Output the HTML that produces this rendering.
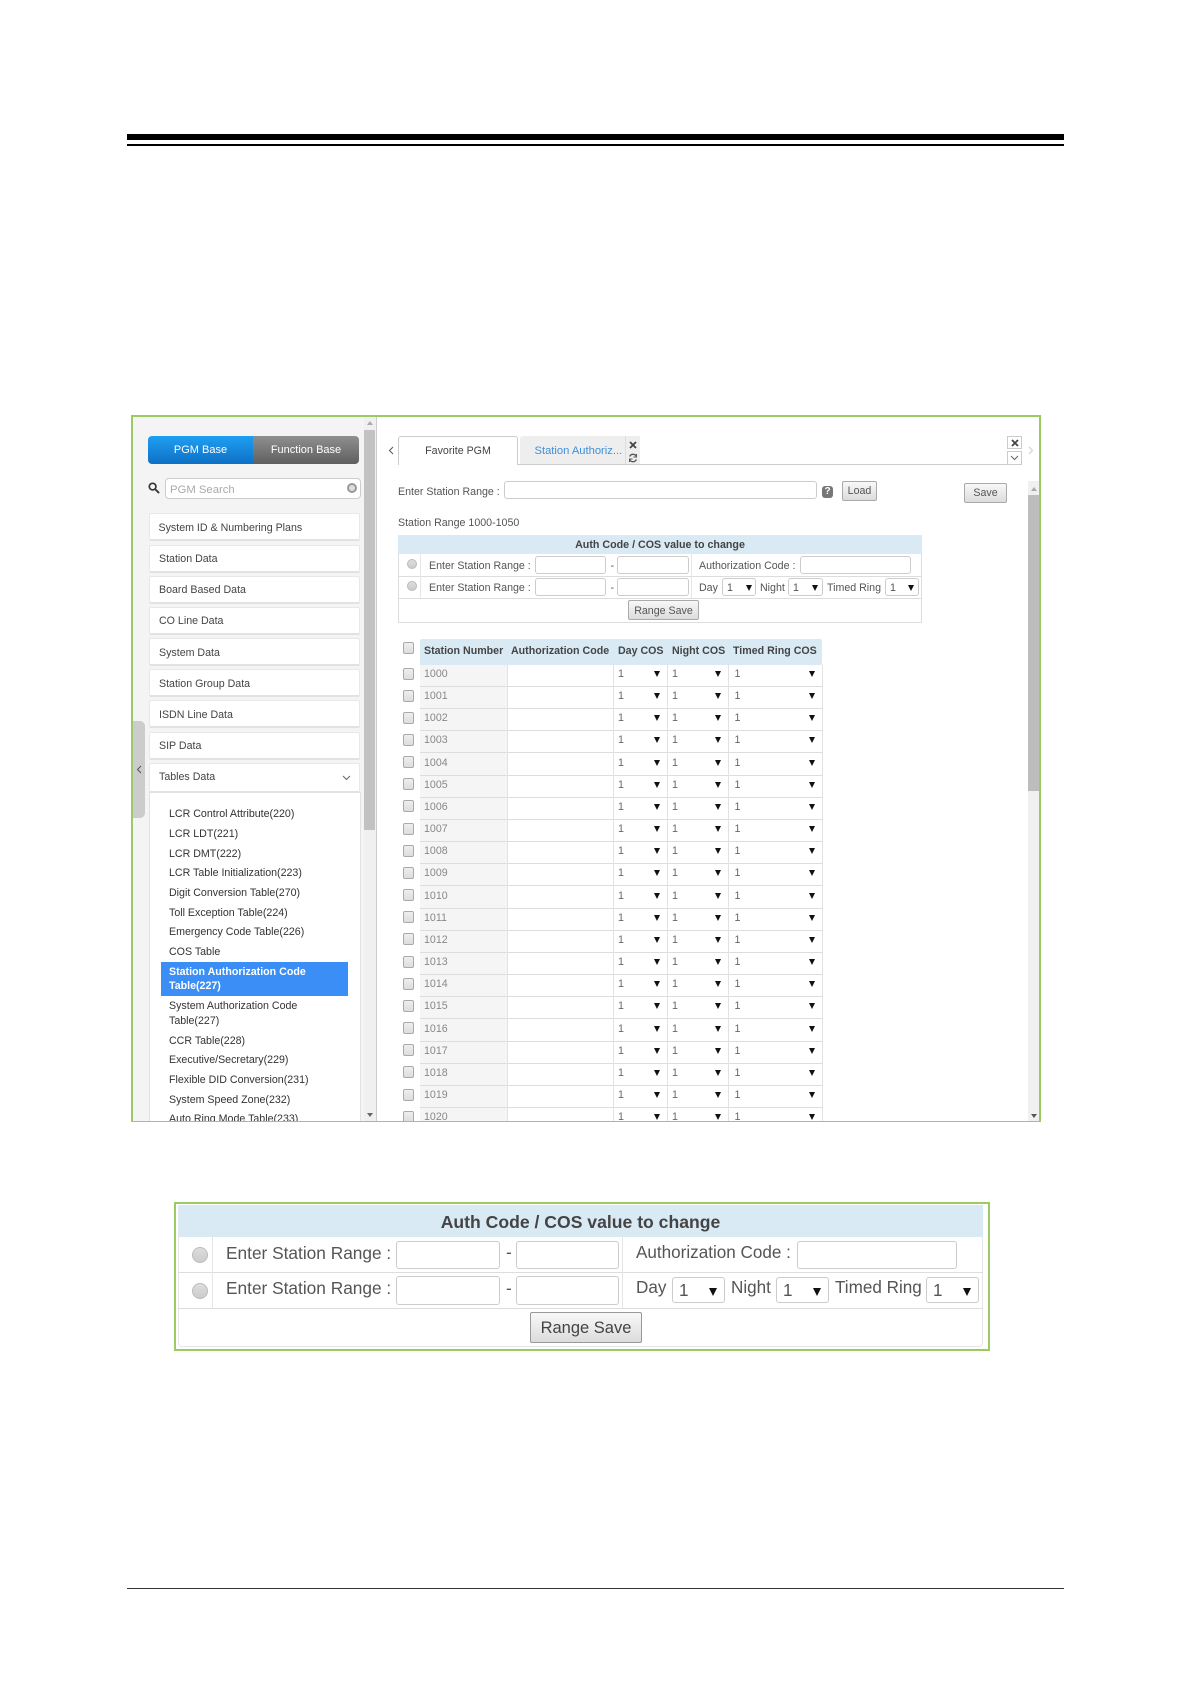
<!DOCTYPE html>
<html><head><meta charset="utf-8"><style>
html,body{margin:0;padding:0;background:#fff}
body{position:relative;width:1191px;height:1684px;overflow:hidden;font-family:"Liberation Sans",sans-serif;font-size:10.650px;color:#555}
div,span,b,i,u,em{position:absolute;display:block;box-sizing:border-box;font-style:normal;text-decoration:none;font-weight:normal}
.t{white-space:nowrap;line-height:14px;height:14px}
.m{left:149px;width:211px;height:28px;background:#fff;border:1px solid #e8e8e8;border-bottom:2px solid #e2e2e2;border-radius:2px;padding-left:9px;line-height:27px;color:#444;white-space:nowrap}
.s{left:169px;color:#333;white-space:nowrap;line-height:14px;height:14px}
.in{background:#fff;border:1px solid #ccc;border-radius:3px}
.btn{background:linear-gradient(#f8f8f8,#dcdcdc);border:1px solid #aaa;border-radius:2px;text-align:center;color:#555;white-space:nowrap}
.rd{border:1px solid #bbb;border-radius:50%;background:linear-gradient(#ddd,#ccc)}
.hl{background:#ddd}
.ar{width:0;height:0;border-left:3px solid transparent;border-right:3px solid transparent;border-top:6px solid #111}
.L{font-size:17.100px;line-height:20px;height:20px}
.r{left:0;width:1191px;height:22.16px}
.r .cb{left:403px;top:2.5px;width:11px;height:12px;border:1px solid #aaa;border-radius:2px;background:linear-gradient(#eee,#ddd)}
.r .n{left:420px;top:0;width:87px;height:100%;background:#f5f5f5;padding-left:4px;line-height:18px;color:#888}
.r .v1,.r .v2,.r .v3{top:0;line-height:18px;color:#666}
.r .v1{left:618px}.r .v2{left:672px}.r .v3{left:734.5px}
.r .a1,.r .a2,.r .a3{top:6px;width:0;height:0;border-left:3px solid transparent;border-right:3px solid transparent;border-top:6px solid #111}
.r .a1{left:653.5px}.r .a2{left:715px}.r .a3{left:809px}
.r .l{left:420px;top:21px;width:402px;height:1px;background:#ddd}
</style></head><body>

<!-- top rules -->
<div style="left:127px;top:134px;width:937px;height:6px;background:#000"></div>
<div style="left:127px;top:144px;width:937px;height:2px;background:#000"></div>
<!-- footer rule -->
<div style="left:127px;top:1588px;width:937px;height:1px;background:#333"></div>

<!-- main screenshot -->
<div style="left:0;top:0;width:1191px;height:1121px;overflow:hidden">
<div style="left:132px;top:417px;width:244px;height:704px;background:#f4f4f4"></div>
<div style="left:376px;top:417px;width:1px;height:704px;background:#ccc"></div>

<!-- sidebar scrollbar -->
<div style="left:364px;top:417px;width:12px;height:704px;background:#f0f0f0"></div>
<div style="left:364px;top:430px;width:11px;height:400px;background:#c2c2c2"></div>
<div style="left:366.500px;top:421px;width:0;height:0;border-left:3.500px solid transparent;border-right:3.500px solid transparent;border-bottom:4px solid #aaa"></div>
<div style="left:366.500px;top:1113px;width:0;height:0;border-left:3.500px solid transparent;border-right:3.500px solid transparent;border-top:4px solid #666"></div>

<!-- PGM switch -->
<div style="left:148px;top:436px;width:105px;height:28px;background:linear-gradient(#1f9ff2,#0d70c6);border-radius:4px 0 0 4px;color:#fff;text-align:center;line-height:29px;font-size:11px">PGM Base</div>
<div style="left:253px;top:436px;width:106px;height:28px;background:linear-gradient(#8f8f8f,#5f5f5f);border-radius:0 4px 4px 0;color:#fff;text-align:center;line-height:29px;font-size:11px">Function Base</div>

<!-- search -->
<svg style="position:absolute;left:148px;top:482px" width="12" height="12" viewBox="0 0 13 13"><circle cx="5" cy="5" r="3.6" fill="none" stroke="#333" stroke-width="1.8"/><path d="M8 8l4 4" stroke="#333" stroke-width="2"/></svg>
<div class="in" style="left:165px;top:478px;width:196px;height:21px;border-radius:4px"></div>
<div class="t" style="left:170px;top:483px;color:#aaa;font-size:11.300px">PGM Search</div>
<div style="left:347px;top:483px;width:10px;height:10px;border:2.500px solid #999;border-radius:50%;background:#ddd"></div>

<!-- menu -->
<div class="m" style="top:513px;line-height:28px;padding-left:8.5px">System ID &amp; Numbering Plans</div>
<div class="m" style="top:544.600px">Station Data</div>
<div class="m" style="top:575.700px">Board Based Data</div>
<div class="m" style="top:606.800px">CO Line Data</div>
<div class="m" style="top:638px;line-height:28px">System Data</div>
<div class="m" style="top:669px;line-height:28px">Station Group Data</div>
<div class="m" style="top:700px;line-height:28px">ISDN Line Data</div>
<div class="m" style="top:732px">SIP Data</div>
<div class="m" style="top:763px;height:30px">Tables Data</div>
<svg style="position:absolute;left:342px;top:775px" width="9" height="6" viewBox="0 0 9 6"><path d="M1 1l3.500 3.500L8 1" fill="none" stroke="#666" stroke-width="1"/></svg>

<!-- submenu -->
<div style="left:149px;top:792px;width:212px;height:330px;background:#fff;border:1px solid #e2e2e2"></div>
<div class="s" style="top:807px">LCR Control Attribute(220)</div>
<div class="s" style="top:827px">LCR LDT(221)</div>
<div class="s" style="top:846.500px">LCR DMT(222)</div>
<div class="s" style="top:866px">LCR Table Initialization(223)</div>
<div class="s" style="top:886px">Digit Conversion Table(270)</div>
<div class="s" style="top:905.500px">Toll Exception Table(224)</div>
<div class="s" style="top:925px">Emergency Code Table(226)</div>
<div class="s" style="top:944.500px">COS Table</div>
<div style="left:161px;top:962px;width:187px;height:34px;background:#3a8ef6"></div>
<div class="s" style="top:965px;color:#fff;font-weight:bold">Station Authorization Code</div>
<div class="s" style="top:979px;color:#fff;font-weight:bold">Table(227)</div>
<div class="s" style="top:999px">System Authorization Code</div>
<div class="s" style="top:1014px">Table(227)</div>
<div class="s" style="top:1034px">CCR Table(228)</div>
<div class="s" style="top:1053px">Executive/Secretary(229)</div>
<div class="s" style="top:1073px">Flexible DID Conversion(231)</div>
<div class="s" style="top:1093px">System Speed Zone(232)</div>
<div class="s" style="top:1112px">Auto Ring Mode Table(233)</div>

<!-- collapse tab -->
<div style="left:132px;top:721px;width:13px;height:97px;background:#ccc;border-radius:0 5px 5px 0"></div>
<svg style="position:absolute;left:136px;top:765px" width="6" height="9" viewBox="0 0 6 9"><path d="M5 1L1.500 4.500 5 8" fill="none" stroke="#555" stroke-width="1"/></svg>

<!-- tabs -->
<svg style="position:absolute;left:388px;top:446px" width="6" height="9" viewBox="0 0 6 9"><path d="M5 1L1.500 4.500 5 8" fill="none" stroke="#555" stroke-width="1"/></svg>
<div style="left:398px;top:464px;width:624px;height:1px;background:#ccc"></div>
<div style="left:398px;top:436px;width:120px;height:29px;background:#fff;border:1px solid #ccc;border-bottom:0;border-radius:3px 3px 0 0;text-align:center;line-height:28px;color:#444">Favorite PGM</div>
<div style="left:520px;top:436px;width:120px;height:28px;background:#eee;border-radius:3px 3px 0 0"></div>
<div class="t" style="left:534.500px;top:444px;color:#3f8fdc;font-size:11.200px">Station Authoriz...</div>
<div style="left:625px;top:436px;width:15px;height:28px;border-left:1px solid #ddd;background:#eee"></div>
<svg style="position:absolute;left:629px;top:441px" width="8" height="8" viewBox="0 0 8 8"><path d="M1 1l6 6M7 1L1 7" stroke="#444" stroke-width="1.800"/></svg>
<svg style="position:absolute;left:628px;top:453px" width="10" height="10" viewBox="0 0 10 10"><path d="M8.500 3.500A3.800 3.800 0 0 0 1.600 3.500M1.500 6.500A3.800 3.800 0 0 0 8.400 6.500" fill="none" stroke="#555" stroke-width="1.300"/><path d="M8.500 1v3h-3M1.500 9V6h3" fill="none" stroke="#555" stroke-width="1"/></svg>
<div style="left:1007px;top:436px;width:15px;height:13px;border:1px solid #ccc;background:#fff"></div>
<svg style="position:absolute;left:1011px;top:439px" width="8" height="8" viewBox="0 0 8 8"><path d="M1 1l6 6M7 1L1 7" stroke="#444" stroke-width="1.800"/></svg>
<div style="left:1007px;top:451px;width:15px;height:14px;border:1px solid #ccc;background:#fff"></div>
<svg style="position:absolute;left:1010px;top:455px" width="9" height="6" viewBox="0 0 9 6"><path d="M1 1l3.500 3.500L8 1" fill="none" stroke="#666" stroke-width="1"/></svg>
<svg style="position:absolute;left:1028px;top:446px" width="6" height="9" viewBox="0 0 6 9"><path d="M1 1l3.500 3.500L1 8" fill="none" stroke="#ccc" stroke-width="1"/></svg>

<!-- load row -->
<div class="t" style="left:398px;top:485px">Enter Station Range :</div>
<div class="in" style="left:504px;top:481px;width:313px;height:18px"></div>
<div style="left:822px;top:486px;width:11px;height:12px;background:#777;border-radius:3px;color:#fff;font-weight:bold;text-align:center;font-size:10px;line-height:12px">?</div>
<div class="btn" style="left:842px;top:481px;width:35px;height:20px;line-height:19px">Load</div>
<div class="btn" style="left:964px;top:483px;width:43px;height:20px;line-height:18px">Save</div>

<!-- main scrollbar -->
<div style="left:1028px;top:481px;width:11px;height:640px;background:#f0f0f0"></div>
<div style="left:1028px;top:495px;width:11px;height:296px;background:#bdbdbd"></div>
<div style="left:1030.500px;top:487px;width:0;height:0;border-left:3px solid transparent;border-right:3px solid transparent;border-bottom:4px solid #aaa"></div>
<div style="left:1030.500px;top:1114px;width:0;height:0;border-left:3px solid transparent;border-right:3px solid transparent;border-top:4px solid #555"></div>

<div class="t" style="left:398px;top:516px">Station Range 1000-1050</div>

<!-- small change table -->
<div style="left:398px;top:535px;width:524px;height:88px;border:1px solid #ddd;background:#fff"></div>
<div style="left:398px;top:535px;width:524px;height:19px;background:#d9eaf5;text-align:center;font-weight:bold;line-height:21px;font-size:10.700px;color:#444">Auth Code / COS value to change</div>
<div class="hl" style="left:398px;top:576px;width:524px;height:1px"></div>
<div class="hl" style="left:398px;top:598px;width:524px;height:1px"></div>
<div class="hl" style="left:420px;top:554px;width:1px;height:44px;background:#e6e6e6"></div>
<div class="hl" style="left:691px;top:554px;width:1px;height:44px;background:#e6e6e6"></div>
<div class="rd" style="left:407px;top:559px;width:10px;height:10px"></div>
<div class="rd" style="left:407px;top:581px;width:10px;height:10px"></div>
<div class="t" style="left:429px;top:559px">Enter Station Range :</div>
<div class="t" style="left:429px;top:581px">Enter Station Range :</div>
<div class="in" style="left:535px;top:556px;width:71px;height:18px"></div>
<div class="in" style="left:617px;top:556px;width:72px;height:18px"></div>
<div class="in" style="left:535px;top:578px;width:71px;height:18px"></div>
<div class="in" style="left:617px;top:578px;width:72px;height:18px"></div>
<div class="t" style="left:610.500px;top:559px">-</div>
<div class="t" style="left:610.500px;top:581px">-</div>
<div class="t" style="left:699px;top:559px">Authorization Code :</div>
<div class="in" style="left:800px;top:556px;width:111px;height:18px"></div>
<div class="t" style="left:699px;top:581px">Day</div>
<div class="in" style="left:722px;top:578px;width:34px;height:18px"></div>
<div class="t" style="left:727px;top:581px">1</div>
<div class="ar" style="left:746px;top:585px"></div>
<div class="t" style="left:760px;top:581px">Night</div>
<div class="in" style="left:788px;top:578px;width:35px;height:18px"></div>
<div class="t" style="left:793px;top:581px">1</div>
<div class="ar" style="left:812px;top:585px"></div>
<div class="t" style="left:827px;top:581px">Timed Ring</div>
<div class="in" style="left:885px;top:578px;width:34px;height:18px"></div>
<div class="t" style="left:890px;top:581px">1</div>
<div class="ar" style="left:908px;top:585px"></div>
<div class="btn" style="left:628px;top:600px;width:71px;height:20px;line-height:20px">Range Save</div>

<!-- main table -->
<div style="left:403px;top:648px;width:11px;height:12px;margin-top:-6px;border:1px solid #aaa;border-radius:2px;background:linear-gradient(#eee,#ddd)"></div>
<div style="left:420px;top:639px;width:402px;height:26px;background:#d9eaf5;border-radius:2px 2px 0 0"></div>
<div class="t" style="left:424px;top:644px;font-weight:bold;color:#444">Station Number</div>
<div class="t" style="left:511px;top:644px;font-weight:bold;color:#444">Authorization Code</div>
<div class="t" style="left:618px;top:644px;font-weight:bold;color:#444">Day COS</div>
<div class="t" style="left:672px;top:644px;font-weight:bold;color:#444">Night COS</div>
<div class="t" style="left:733px;top:644px;font-weight:bold;color:#444">Timed Ring COS</div>

<div class="r" style="top:665px"><i class="cb"></i><b class="n">1000</b><u class="v1">1</u><em class="a1"></em><u class="v2">1</u><em class="a2"></em><u class="v3">1</u><em class="a3"></em><span class="l"></span></div>
<div class="r" style="top:687.160px"><i class="cb"></i><b class="n">1001</b><u class="v1">1</u><em class="a1"></em><u class="v2">1</u><em class="a2"></em><u class="v3">1</u><em class="a3"></em><span class="l"></span></div>
<div class="r" style="top:709.320px"><i class="cb"></i><b class="n">1002</b><u class="v1">1</u><em class="a1"></em><u class="v2">1</u><em class="a2"></em><u class="v3">1</u><em class="a3"></em><span class="l"></span></div>
<div class="r" style="top:731.480px"><i class="cb"></i><b class="n">1003</b><u class="v1">1</u><em class="a1"></em><u class="v2">1</u><em class="a2"></em><u class="v3">1</u><em class="a3"></em><span class="l"></span></div>
<div class="r" style="top:753.640px"><i class="cb"></i><b class="n">1004</b><u class="v1">1</u><em class="a1"></em><u class="v2">1</u><em class="a2"></em><u class="v3">1</u><em class="a3"></em><span class="l"></span></div>
<div class="r" style="top:775.800px"><i class="cb"></i><b class="n">1005</b><u class="v1">1</u><em class="a1"></em><u class="v2">1</u><em class="a2"></em><u class="v3">1</u><em class="a3"></em><span class="l"></span></div>
<div class="r" style="top:797.960px"><i class="cb"></i><b class="n">1006</b><u class="v1">1</u><em class="a1"></em><u class="v2">1</u><em class="a2"></em><u class="v3">1</u><em class="a3"></em><span class="l"></span></div>
<div class="r" style="top:820.120px"><i class="cb"></i><b class="n">1007</b><u class="v1">1</u><em class="a1"></em><u class="v2">1</u><em class="a2"></em><u class="v3">1</u><em class="a3"></em><span class="l"></span></div>
<div class="r" style="top:842.280px"><i class="cb"></i><b class="n">1008</b><u class="v1">1</u><em class="a1"></em><u class="v2">1</u><em class="a2"></em><u class="v3">1</u><em class="a3"></em><span class="l"></span></div>
<div class="r" style="top:864.440px"><i class="cb"></i><b class="n">1009</b><u class="v1">1</u><em class="a1"></em><u class="v2">1</u><em class="a2"></em><u class="v3">1</u><em class="a3"></em><span class="l"></span></div>
<div class="r" style="top:886.600px"><i class="cb"></i><b class="n">1010</b><u class="v1">1</u><em class="a1"></em><u class="v2">1</u><em class="a2"></em><u class="v3">1</u><em class="a3"></em><span class="l"></span></div>
<div class="r" style="top:908.760px"><i class="cb"></i><b class="n">1011</b><u class="v1">1</u><em class="a1"></em><u class="v2">1</u><em class="a2"></em><u class="v3">1</u><em class="a3"></em><span class="l"></span></div>
<div class="r" style="top:930.920px"><i class="cb"></i><b class="n">1012</b><u class="v1">1</u><em class="a1"></em><u class="v2">1</u><em class="a2"></em><u class="v3">1</u><em class="a3"></em><span class="l"></span></div>
<div class="r" style="top:953.080px"><i class="cb"></i><b class="n">1013</b><u class="v1">1</u><em class="a1"></em><u class="v2">1</u><em class="a2"></em><u class="v3">1</u><em class="a3"></em><span class="l"></span></div>
<div class="r" style="top:975.240px"><i class="cb"></i><b class="n">1014</b><u class="v1">1</u><em class="a1"></em><u class="v2">1</u><em class="a2"></em><u class="v3">1</u><em class="a3"></em><span class="l"></span></div>
<div class="r" style="top:997.400px"><i class="cb"></i><b class="n">1015</b><u class="v1">1</u><em class="a1"></em><u class="v2">1</u><em class="a2"></em><u class="v3">1</u><em class="a3"></em><span class="l"></span></div>
<div class="r" style="top:1019.560px"><i class="cb"></i><b class="n">1016</b><u class="v1">1</u><em class="a1"></em><u class="v2">1</u><em class="a2"></em><u class="v3">1</u><em class="a3"></em><span class="l"></span></div>
<div class="r" style="top:1041.720px"><i class="cb"></i><b class="n">1017</b><u class="v1">1</u><em class="a1"></em><u class="v2">1</u><em class="a2"></em><u class="v3">1</u><em class="a3"></em><span class="l"></span></div>
<div class="r" style="top:1063.880px"><i class="cb"></i><b class="n">1018</b><u class="v1">1</u><em class="a1"></em><u class="v2">1</u><em class="a2"></em><u class="v3">1</u><em class="a3"></em><span class="l"></span></div>
<div class="r" style="top:1086.040px"><i class="cb"></i><b class="n">1019</b><u class="v1">1</u><em class="a1"></em><u class="v2">1</u><em class="a2"></em><u class="v3">1</u><em class="a3"></em><span class="l"></span></div>
<div class="r" style="top:1108.200px"><i class="cb"></i><b class="n">1020</b><u class="v1">1</u><em class="a1"></em><u class="v2">1</u><em class="a2"></em><u class="v3">1</u><em class="a3"></em><span class="l"></span></div>

<div style="left:507px;top:665px;width:1px;height:456px;background:#e2e2e2"></div>
<div style="left:613px;top:665px;width:1px;height:456px;background:#e2e2e2"></div>
<div style="left:667px;top:665px;width:1px;height:456px;background:#e2e2e2"></div>
<div style="left:728px;top:665px;width:1px;height:456px;background:#e2e2e2"></div>
<div style="left:822px;top:665px;width:1px;height:456px;background:#e2e2e2"></div>
</div>
<!-- green frame -->
<div style="left:131px;top:415px;width:910px;height:707px;border:2px solid #9ccb64;border-bottom-width:1.500px"></div>

<!-- bottom enlarged panel -->
<div style="left:174px;top:1202px;width:816px;height:149px;border:2px solid #9ccb64;background:#fff"></div>
<div style="left:178px;top:1205px;width:805px;height:142px;border:1px solid #e6e6e6;border-radius:4px"></div>
<div style="left:178px;top:1205px;width:805px;height:32px;background:#d9eaf5;text-align:center;font-size:17.600px;font-weight:bold;line-height:34px;color:#444">Auth Code / COS value to change</div>
<div style="left:178px;top:1272px;width:805px;height:1px;background:#ddd"></div>
<div style="left:178px;top:1308px;width:805px;height:1px;background:#ddd"></div>
<div style="left:212px;top:1237px;width:1px;height:71px;background:#e6e6e6"></div>
<div style="left:622px;top:1237px;width:1px;height:71px;background:#e6e6e6"></div>
<div class="rd" style="left:192px;top:1247px;width:16px;height:16px"></div>
<div class="rd" style="left:192px;top:1283px;width:16px;height:16px"></div>
<div class="t L" style="left:226px;top:1243px;font-size:17.300px">Enter Station Range :</div>
<div class="t L" style="left:226px;top:1278px;font-size:17.300px">Enter Station Range :</div>
<div class="in" style="left:396px;top:1241px;width:104px;height:28px"></div>
<div class="in" style="left:516px;top:1241px;width:103px;height:28px"></div>
<div class="in" style="left:396px;top:1276px;width:104px;height:29px"></div>
<div class="in" style="left:516px;top:1276px;width:103px;height:29px"></div>
<div class="t L" style="left:506px;top:1243px">-</div>
<div class="t L" style="left:506px;top:1279px">-</div>
<div class="t L" style="left:636px;top:1243px">Authorization Code :</div>
<div class="in" style="left:797px;top:1241px;width:160px;height:28px"></div>
<div class="t L" style="left:636px;top:1278px">Day</div>
<div class="in" style="left:672px;top:1277px;width:53px;height:26px"></div>
<div class="t L" style="left:679px;top:1281px">1</div>
<div class="ar" style="left:709px;top:1288px;border-left-width:4px;border-right-width:4px;border-top-width:8px"></div>
<div class="t L" style="left:731px;top:1278px">Night</div>
<div class="in" style="left:776px;top:1277px;width:53px;height:26px"></div>
<div class="t L" style="left:783px;top:1281px">1</div>
<div class="ar" style="left:813px;top:1288px;border-left-width:4px;border-right-width:4px;border-top-width:8px"></div>
<div class="t L" style="left:835px;top:1278px">Timed Ring</div>
<div class="in" style="left:926px;top:1277px;width:53px;height:26px"></div>
<div class="t L" style="left:933px;top:1281px">1</div>
<div class="ar" style="left:963px;top:1288px;border-left-width:4px;border-right-width:4px;border-top-width:8px"></div>
<div class="btn" style="left:530px;top:1312px;width:112px;height:31px;font-size:16.500px;line-height:30px;color:#444;border-color:#999">Range Save</div>

</body></html>
